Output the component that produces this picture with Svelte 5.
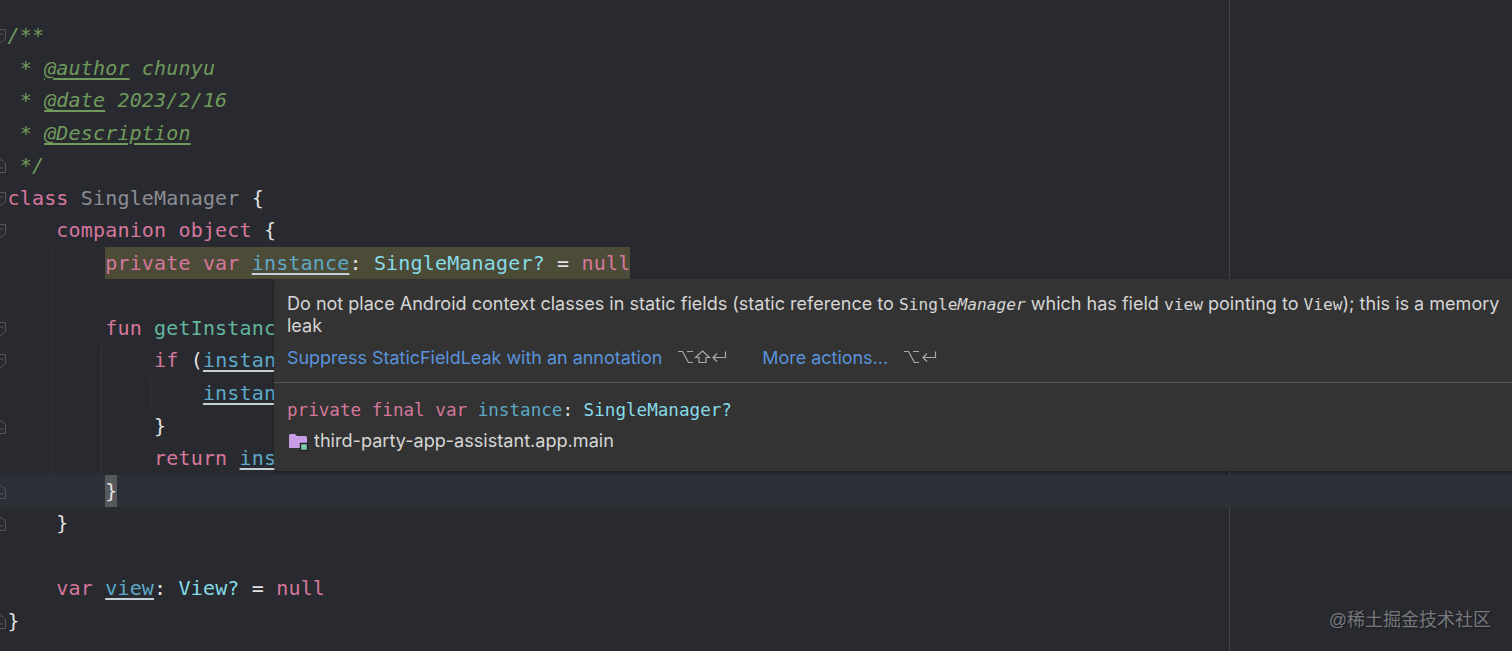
<script>
  const k = 'k', c = 'c', f = 'f', t = 't', w = 'w', g = 'g', fn = 'fn', p = 'p', a = 'a';
  const lines = [
    { fold: 'open', segs: [[c, '/**']] },
    { segs: [[c, ' * '], [a, '@author'], [c, ' chunyu']] },
    { segs: [[c, ' * '], [a, '@date'], [c, ' 2023/2/16']] },
    { segs: [[c, ' * '], [a, '@Description']] },
    { fold: 'close', segs: [[c, ' */']] },
    { fold: 'open', segs: [[k, 'class'], [p, ' '], [g, 'SingleManager'], [p, ' '], [w, '{']] },
    { fold: 'open', segs: [[p, '    '], [k, 'companion object'], [p, ' '], [w, '{']] },
    { segs: [[p, '        ']], sel: [[k, 'private var'], [p, ' '], [f, 'instance'], [w, ': '], [t, 'SingleManager?'], [w, ' = '], [k, 'null']] },
    { segs: [[p, ' ']] },
    { fold: 'open', segs: [[p, '        '], [k, 'fun'], [p, ' '], [fn, 'getInstance']] },
    { fold: 'open', segs: [[p, '            '], [k, 'if'], [p, ' '], [w, '('], [f, 'instance']] },
    { segs: [[p, '                '], [f, 'instance']] },
    { fold: 'close', segs: [[p, '            '], [w, '}']] },
    { segs: [[p, '            '], [k, 'return'], [p, ' '], [f, 'instance']] },
    { fold: 'close', current: true, segs: [[p, '        ']], brace: '}' },
    { fold: 'close', segs: [[p, '    '], [w, '}']] },
    { segs: [[p, ' ']] },
    { segs: [[p, '    '], [k, 'var'], [p, ' '], [f, 'view'], [w, ': '], [t, 'View?'], [w, ' = '], [k, 'null']] },
    { fold: 'close', segs: [[w, '}']] }
  ];
</script>

<div class="editor">
  <div class="margin"></div>
  <div class="guide g1"></div>
  <div class="guide g2"></div>
  <div class="guide g3"></div>

  {#each lines as line}
    <div class="line" class:current={line.current}>
      {#if line.fold}
        <svg class="fold" width="7" height="16" viewBox="0 0 7 16" fill="none" stroke="#55575c" stroke-width="1">
          {#if line.fold === 'open'}
            <path d="M-3 1.5H5.5V10.5L1 14.5L-3 11" />
            <path d="M-1 6H3.5" />
          {:else}
            <path d="M-3 14.5H5.5V5.5L1 1.5L-3 5" />
            <path d="M-1 10H3.5" />
          {/if}
        </svg>
      {/if}
      <code class="src">{#each line.segs as [cls, text]}<span class={cls}>{text}</span>{/each}{#if line.sel}<span class="sel">{#each line.sel as [cls, text]}<span class={cls}>{text}</span>{/each}</span>{/if}{#if line.brace}<span class="brace">{line.brace}</span>{/if}</code>
    </div>
  {/each}

  <div class="tip">
    <div class="msg">Do not place Android context classes in static fields (static reference to <span class="mono">Single<em>Manager</em></span> which has field <span class="mono">view</span> pointing to <span class="mono">View</span>); this is a memory leak</div>
    <div class="actions">
      <span class="link">Suppress StaticFieldLeak with an annotation</span>
      <svg class="keys k3" width="50" height="16" viewBox="0 0 50 16" fill="none" stroke="#a9a9a9" stroke-width="1.2">
        <path d="M0 2.5H4.5L10.5 13.5H15M9 2.5H15" />
        <path d="M24.5 2L31.5 8.5H28V13.5H21V8.5H17.5Z" />
        <path d="M47.5 2.5V8.5H35M39 4.5L35 8.5L39 12.5" />
      </svg>
      <span class="link more">More actions...</span>
      <svg class="keys k2" width="34" height="16" viewBox="0 0 34 16" fill="none" stroke="#a9a9a9" stroke-width="1.2">
        <path d="M0 2.5H4.5L10.5 13.5H15M9 2.5H15" />
        <path d="M31.5 2.5V8.5H19M23 4.5L19 8.5L23 12.5" />
      </svg>
    </div>
    <div class="divider"></div>
    <div class="decl"><span class="k">private final var</span>{' '}<span class="fi">instance</span><span class="w">{': '}</span><span class="t">SingleManager?</span></div>
    <div class="loc">
      <svg class="folder" width="20" height="20" viewBox="0 0 20 20">
        <path d="M1 3.5a1.5 1.5 0 0 1 1.5-1.5H7l2 2h8.5a1.5 1.5 0 0 1 1.5 1.5V15a1 1 0 0 1-1 1H2a1 1 0 0 1-1-1Z" fill="#c79de6" />
        <rect x="12.5" y="11.5" width="7" height="7" fill="#7cc9ac" stroke="#1f2023" stroke-width="1.4" />
      </svg>
      <span>third-party-app-assistant.app.main</span>
    </div>
  </div>

  <div class="mark">@稀土掘金技术社区</div>
</div>

<style>
  :global(body) {
    margin: 0;
    background: #282a30;
    overflow: hidden;
  }
  .editor {
    position: relative;
    height: 651px;
    overflow: hidden;
    box-sizing: border-box;
    padding-top: 19px;
    background: #282a30;
    font-family: "DejaVu Sans Mono", monospace;
    font-size: 20px;
    letter-spacing: 0.17px;
  }
  .line {
    position: relative;
    height: 32.55px;
    line-height: 32.55px;
    padding-left: 7.5px;
    box-sizing: border-box;
  }
  .src {
    font: inherit;
    white-space: pre;
  }
  .current {
    background: #2c3037;
  }
  .fold {
    position: absolute;
    left: 0;
    top: 9px;
  }
  .margin {
    position: absolute;
    left: 1229px;
    top: 0;
    bottom: 0;
    width: 1px;
    background: #3f4146;
  }
  .guide {
    position: absolute;
    width: 1px;
    background: #33353b;
  }
  .g1 { left: 52px; top: 247px; height: 233px; }
  .g2 { left: 101px; top: 345px; height: 129px; }
  .g3 { left: 150px; top: 377px; height: 31px; }
  .c { color: #6f9a5c; font-style: italic; }
  .a { color: #6f9a5c; font-style: italic; text-decoration: underline; text-underline-offset: 3px; }
  .k { color: #d6779c; }
  .g { color: #8b8d93; }
  .w { color: #e2e2e2; }
  .t { color: #86dbe9; }
  .f { color: #5ea9c7; text-decoration: underline; text-decoration-color: #c3d0d6; text-underline-offset: 3px; }
  .fn { color: #63b59f; }
  .sel {
    display: inline-block;
    height: 32.55px;
    background: #4c4b37;
    vertical-align: top;
  }
  .brace {
    display: inline-block;
    height: 32.55px;
    background: #55585c;
    color: #e2e2e2;
    vertical-align: top;
  }
  .tip {
    position: absolute;
    left: 274px;
    right: 0;
    top: 279px;
    height: 192px;
    box-sizing: border-box;
    padding-top: 14px;
    background: #333333;
    border-radius: 4px 0 0 4px;
    box-shadow: 0 1px 3px rgba(0, 0, 0, 0.3);
    font-family: Inter, "Noto Sans", sans-serif;
    font-size: 18.05px;
    letter-spacing: 0;
    color: #d6d6d6;
  }
  .msg {
    padding: 0 8px 0 13px;
    line-height: 21px;
  }
  .mono {
    font-family: "DejaVu Sans Mono", monospace;
    font-size: 16.2px;
  }
  .msg em { font-style: italic; }
  .actions {
    display: flex;
    align-items: center;
    height: 22px;
    margin-top: 10px;
    padding-left: 13px;
    font-size: 17.95px;
  }
  .link { color: #5a93dc; }
  .keys { margin-left: 16px; }
  .more { margin-left: 34px; }
  .divider {
    height: 1px;
    margin-top: 14px;
    background: #585858;
  }
  .decl {
    margin-top: 15px;
    padding-left: 13px;
    height: 24px;
    line-height: 24px;
    font-family: "DejaVu Sans Mono", monospace;
    font-size: 17.6px;
    white-space: pre;
  }
  .fi { color: #5ea9c7; }
  .loc {
    display: flex;
    align-items: center;
    gap: 6px;
    margin-top: 7px;
    padding-left: 14px;
    height: 22px;
    font-size: 18.1px;
  }
  .folder { margin-top: 4px; }
  .mark {
    position: absolute;
    right: 21px;
    top: 608px;
    font-family: "Liberation Sans", "Noto Sans CJK SC", sans-serif;
    font-size: 18px;
    letter-spacing: 0;
    line-height: 24px;
    color: #77787d;
    text-shadow: 1px 1px 2px #1a1b1e;
  }
</style>
